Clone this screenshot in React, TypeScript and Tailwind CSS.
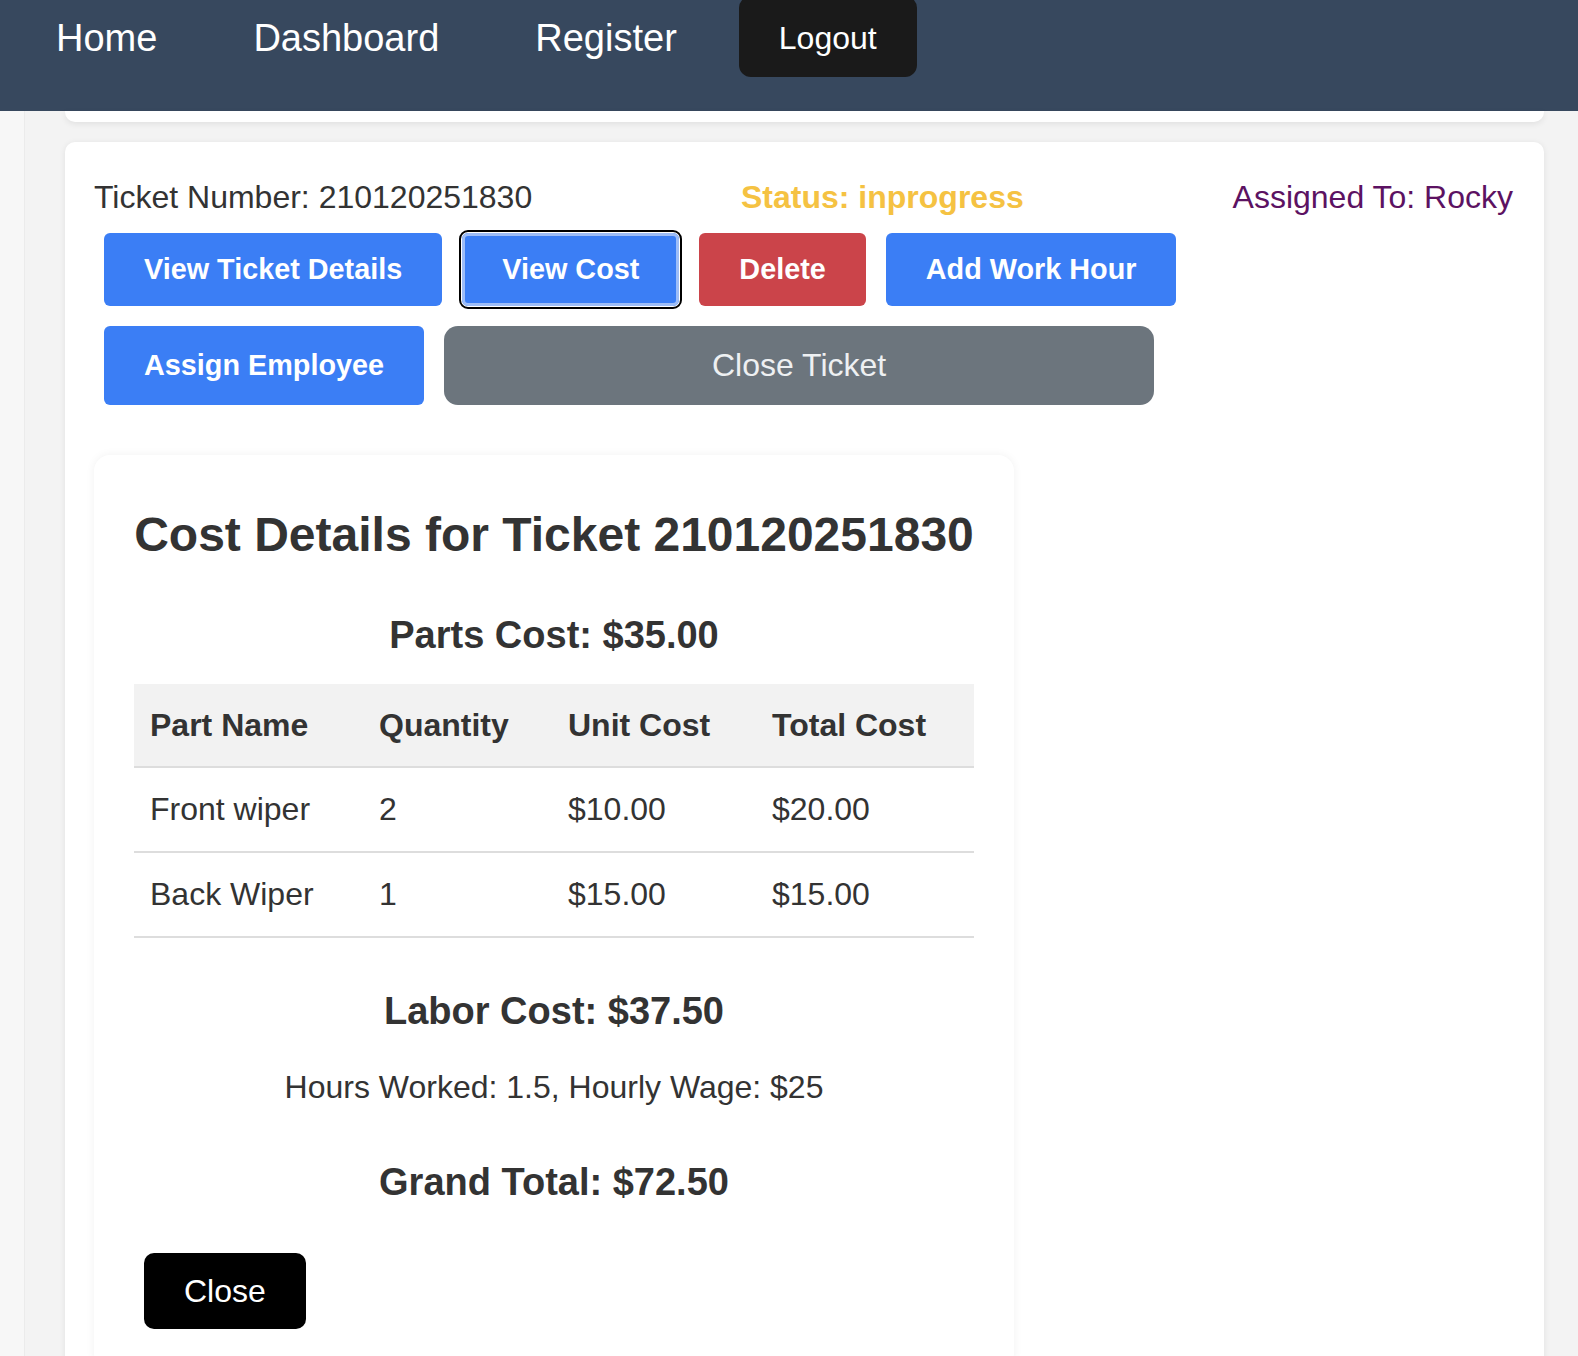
import React from "react";

const parts = [
  { name: "Front wiper", qty: 2, unit: 10, total: 20 },
  { name: "Back Wiper", qty: 1, unit: 15, total: 15 },
];

const money = (n: number) => `$${n.toFixed(2)}`;

const NavBar = () => {
  return (
    <nav className="h-[111px] bg-[#37485e] text-white">
      <div className="flex h-[77px] items-center">
        <a className="ml-[56px] text-[38px]">Home</a>
        <a className="ml-[96px] text-[38px]">Dashboard</a>
        <a className="ml-[96px] text-[38px]">Register</a>
        <button
          type="button"
          className="ml-[62px] -mt-[4px] flex h-[81px] items-center rounded-[12px] bg-[#1a1a1a] px-10 pt-[4px] text-[32px] text-white"
        >
          Logout
        </button>
      </div>
    </nav>
  );
};

const CostDetails = () => {
  const partsTotal = parts.reduce((s, p) => s + p.total, 0);
  const hours = 1.5;
  const wage = 25;
  const labor = hours * wage;

  return (
    <div className="mt-[40px] w-[920px] rounded-[16px] bg-white px-[40px] pt-[52px] pb-[40px] shadow-[0_0_10px_rgba(0,0,0,0.06)]">
      <h2 className="text-center text-[48px] font-bold">
        Cost Details for Ticket 210120251830
      </h2>
      <h3 className="mt-[52px] text-center text-[38px] font-bold">
        Parts Cost: {money(partsTotal)}
      </h3>
      <table className="mt-[26px] w-full table-fixed border-collapse text-left text-[32px]">
        <colgroup>
          <col className="w-[229px]" />
          <col className="w-[189px]" />
          <col className="w-[204px]" />
          <col className="w-[218px]" />
        </colgroup>
        <thead>
          <tr className="bg-[#f2f2f2]">
            <th className="border-b-2 border-[#dddddd] px-4 py-[23px] font-bold">Part Name</th>
            <th className="border-b-2 border-[#dddddd] px-4 py-[23px] font-bold">Quantity</th>
            <th className="border-b-2 border-[#dddddd] px-4 py-[23px] font-bold">Unit Cost</th>
            <th className="border-b-2 border-[#dddddd] px-4 py-[23px] font-bold">Total Cost</th>
          </tr>
        </thead>
        <tbody>
          {parts.map((p) => (
            <tr key={p.name}>
              <td className="border-b-2 border-[#dddddd] px-4 py-[23px]">{p.name}</td>
              <td className="border-b-2 border-[#dddddd] px-4 py-[23px]">{p.qty}</td>
              <td className="border-b-2 border-[#dddddd] px-4 py-[23px]">{money(p.unit)}</td>
              <td className="border-b-2 border-[#dddddd] px-4 py-[23px]">{money(p.total)}</td>
            </tr>
          ))}
        </tbody>
      </table>
      <h3 className="mt-[52px] text-center text-[38px] font-bold">
        Labor Cost: {money(labor)}
      </h3>
      <p className="mt-[35px] text-center text-[32px]">
        Hours Worked: {hours}, Hourly Wage: ${wage}
      </p>
      <h3 className="mt-[56px] text-center text-[38px] font-bold">
        Grand Total: {money(partsTotal + labor)}
      </h3>
      <button
        type="button"
        className="mt-[48px] ml-[10px] rounded-[10px] bg-black px-10 py-[19.5px] text-[32px] text-white"
      >
        Close
      </button>
    </div>
  );
};

const TicketCard = () => {
  const blueBtn =
    "m-[10px] rounded-[6px] bg-[#3b7ef5] px-10 py-5 text-[28.8px] font-bold text-white";

  return (
    <div className="mt-[20px] rounded-[10px] bg-white px-[29px] pt-[37px] shadow-[0_1px_6px_rgba(0,0,0,0.08)]">
      <div className="flex justify-between text-[32px]">
        <span className="text-[#333333]">Ticket Number: 210120251830</span>
        <span className="font-bold text-[#f5c242]">Status: inprogress</span>
        <span className="mr-[2px] text-[#5c1262]">Assigned To: Rocky</span>
      </div>
      <div className="mt-[7px] flex">
        <button type="button" className={blueBtn}>
          View Ticket Details
        </button>
        <button
          type="button"
          className="m-[10px] rounded-[6px] bg-[#3b7ef5] px-10 py-5 text-[28.8px] font-bold text-white shadow-[inset_0_0_0_3px_#9dbdf8] outline-2 outline-offset-[1px] outline-black"
        >
          View Cost
        </button>
        <button
          type="button"
          className="m-[10px] rounded-[6px] bg-[#cb444a] px-10 py-5 text-[28.8px] font-bold text-white"
        >
          Delete
        </button>
        <button type="button" className={blueBtn}>
          Add Work Hour
        </button>
      </div>
      <div className="flex">
        <button type="button" className={blueBtn}>
          Assign Employee
        </button>
        <button
          type="button"
          className="m-[10px] w-[710px] rounded-[14px] bg-[#6c757d] py-[21px] text-[32px] text-[#eef0f2]"
        >
          Close Ticket
        </button>
      </div>
      <CostDetails />
    </div>
  );
};

export default function App() {
  return (
    <div className="min-h-screen overflow-hidden bg-[#f7f7f7] font-['Liberation_Sans',Arial,sans-serif] leading-[1.15] text-[#333333]">
      <NavBar />
      <div className="ml-[24px] min-h-[1245px] border-l border-[#ebebeb] bg-[#f3f3f3] pr-[34px] pl-[40px]">
        <div className="h-[11px] rounded-b-[10px] bg-white shadow-[0_2px_6px_rgba(0,0,0,0.08)]" />
        <TicketCard />
      </div>
    </div>
  );
}
